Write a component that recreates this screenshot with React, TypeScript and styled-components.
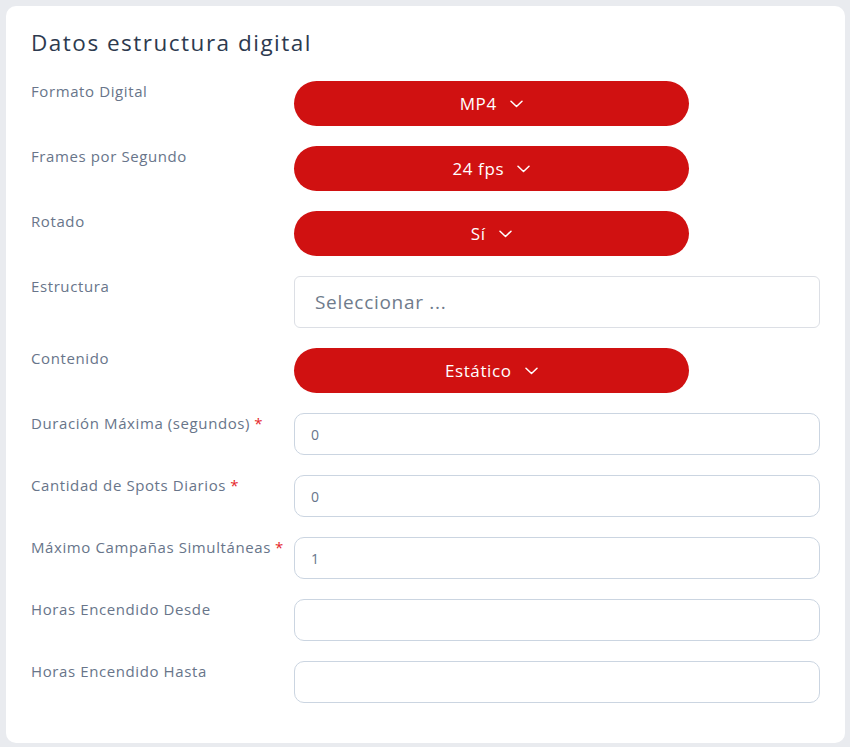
import React from "react";
import styled, { createGlobalStyle } from "styled-components";

const Global = createGlobalStyle`
  html, body { margin: 0; padding: 0; background: #e9ebef; }
  body { font-family: "Open Sans", "Noto Sans", sans-serif; }
  * { box-sizing: border-box; }
`;

const Page = styled.div`
  padding: 6px 5px 4px 6px;
`;

const Card = styled.section`
  background: #ffffff;
  border-radius: 10px;
  padding: 22px 25px 20px 25px;
`;

const Title = styled.h2`
  margin: 0 0 23px 0;
  font-size: 22.5px;
  line-height: 30px;
  font-weight: 500;
  color: #2d3a4f;
  letter-spacing: 1.5px;
`;

const Row = styled.div`
  display: grid;
  grid-template-columns: 1fr 2fr;
  align-items: start;
  margin-bottom: 20px;
`;

const Label = styled.label`
  font-size: 15px;
  line-height: 21px;
  color: #68758a;
  letter-spacing: 0.6px;
  white-space: nowrap;
`;

const Required = styled.span`
  color: #e5252a;
  margin-left: 4px;
`;

const Pill = styled.button`
  width: 75%;
  height: 45px;
  border: none;
  border-radius: 23px;
  background: #d01111;
  color: #ffffff;
  font-family: inherit;
  font-size: 17px;
  letter-spacing: 0.6px;
  display: flex;
  align-items: center;
  justify-content: center;
  gap: 13px;
  padding: 0;
  cursor: pointer;
`;

const SelectBox = styled.div`
  height: 52px;
  border: 1px solid #dcdfe5;
  border-radius: 6px;
  display: flex;
  align-items: center;
  padding-left: 20px;
  font-size: 19px;
  letter-spacing: 0.7px;
  color: #6f7b8c;
`;

const Input = styled.input`
  height: 42px;
  width: 100%;
  border: 1px solid #cbd5e1;
  border-radius: 10px;
  padding: 0 16px;
  font-family: inherit;
  font-size: 14px;
  color: #68758a;
  background: #fff;
  outline: none;
`;

const Chevron = () => (
  <svg width="13" height="8" viewBox="0 0 13 8" fill="none">
    <path d="M1 1.2L6.5 6.5L12 1.2" stroke="#fff" strokeWidth="1.5" strokeLinecap="round" strokeLinejoin="round" />
  </svg>
);

const PillRow = ({ label, value }: { label: string; value: string }) => (
  <Row>
    <Label>{label}</Label>
    <Pill>
      <span>{value}</span>
      <Chevron />
    </Pill>
  </Row>
);

const InputRow = ({ label, value, required }: { label: string; value: string; required?: boolean }) => (
  <Row>
    <Label>
      {label}
      {required && <Required>*</Required>}
    </Label>
    <Input defaultValue={value} />
  </Row>
);

export default function App() {
  return (
    <>
      <Global />
      <Page>
        <Card>
          <Title>Datos estructura digital</Title>
          <PillRow label="Formato Digital" value="MP4" />
          <PillRow label="Frames por Segundo" value="24 fps" />
          <PillRow label="Rotado" value="Sí" />
          <Row>
            <Label>Estructura</Label>
            <SelectBox>Seleccionar ...</SelectBox>
          </Row>
          <PillRow label="Contenido" value="Estático" />
          <InputRow label="Duración Máxima (segundos)" value="0" required />
          <InputRow label="Cantidad de Spots Diarios" value="0" required />
          <InputRow label="Máximo Campañas Simultáneas" value="1" required />
          <InputRow label="Horas Encendido Desde" value="" />
          <InputRow label="Horas Encendido Hasta" value="" />
        </Card>
      </Page>
    </>
  );
}
